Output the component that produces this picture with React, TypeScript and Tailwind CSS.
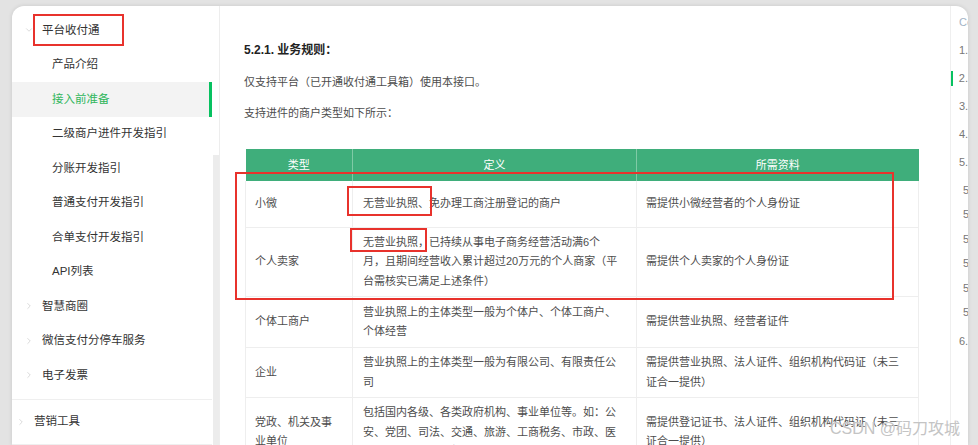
import { ChevronDown, ChevronRight } from 'lucide-react'

const subItems = [
  '产品介绍',
  '接入前准备',
  '二级商户进件开发指引',
  '分账开发指引',
  '普通支付开发指引',
  '合单支付开发指引',
  'API列表',
]

const groupItems = ['智慧商圈', '微信支付分停车服务', '电子发票']

const rows = [
  { type: ['小微'], def: ['无营业执照、免办理工商注册登记的商户'], need: ['需提供小微经营者的个人身份证'], h: 'h-[46px]' },
  {
    type: ['个人卖家'],
    def: ['无营业执照，已持续从事电子商务经营活动满6个', '月，且期间经营收入累计超过20万元的个人商家（平', '台需核实已满足上述条件）'],
    need: ['需提供个人卖家的个人身份证'],
    h: 'h-[69px]',
  },
  {
    type: ['个体工商户'],
    def: ['营业执照上的主体类型一般为个体户、个体工商户、', '个体经营'],
    need: ['需提供营业执照、经营者证件'],
    h: 'h-[51px]',
  },
  {
    type: ['企业'],
    def: ['营业执照上的主体类型一般为有限公司、有限责任公', '司'],
    need: ['需提供营业执照、法人证件、组织机构代码证（未三', '证合一提供）'],
    h: 'h-[50px]',
  },
  {
    type: ['党政、机关及事', '业单位'],
    def: ['包括国内各级、各类政府机构、事业单位等。如：公', '安、党团、司法、交通、旅游、工商税务、市政、医', '疗、教育、学校等机构'],
    need: ['需提供登记证书、法人证件、组织机构代码证（未三', '证合一提供）'],
    h: 'h-[69px]',
  },
]

function Lines({ lines }: { lines: string[] }) {
  return (
    <>
      {lines.map((l) => (
        <div key={l} className="whitespace-nowrap">
          {l}
        </div>
      ))}
    </>
  )
}

function Sidebar() {
  return (
    <div className="relative flex w-[208px] shrink-0 border-r border-[#ededed]">
      <div className="w-[200px] shrink-0 pt-[7px] text-[11.5px] text-[#333]">
        <div className="flex h-[34.5px] items-center pl-[12px]">
          <ChevronDown size={10} strokeWidth={1.5} className="text-[#c4c4c4]" />
          <span className="ml-[8px]">平台收付通</span>
        </div>
        {subItems.map((s) => (
          <div
            key={s}
            className={
              s === '接入前准备'
                ? 'flex h-[34.5px] items-center border-r-[3px] border-[#07c160] bg-[#f3f3f3] pl-[40px] text-[#2fb65c]'
                : 'flex h-[34.5px] items-center pl-[40px]'
            }
          >
            {s}
          </div>
        ))}
        {groupItems.map((g) => (
          <div key={g} className="flex h-[34.5px] items-center pl-[12px]">
            <ChevronRight size={10} strokeWidth={1.5} className="text-[#c4c4c4]" />
            <span className="ml-[8px]">{g}</span>
          </div>
        ))}
        <div className="mt-[6px] flex h-[46px] items-center border-t border-b border-[#efefef] pl-[4px]">
          <ChevronRight size={10} strokeWidth={1.5} className="text-[#c4c4c4]" />
          <span className="ml-[8px]">营销工具</span>
        </div>
      </div>
      <div className="ml-[1px] flex w-[6px] flex-col">
        <div className="h-[149px] shrink-0" />
        <div className="flex-1 bg-[#ececec]" />
      </div>
      <div className="absolute left-[21px] top-[8px] h-[32px] w-[91px] border-2 border-[#e8322c]" />
    </div>
  )
}

function Table() {
  return (
    <div className="relative w-[673px]">
      <table className="w-[673px] table-fixed border-collapse text-[11px] text-[#4d4d4d]">
        <colgroup>
          <col className="w-[107px]" />
          <col className="w-[284px]" />
          <col className="w-[282px]" />
        </colgroup>
        <thead>
          <tr className="h-[32px] bg-[#3fae7b] text-white">
            <th className="border-r border-[#7fcaa6] font-normal">类型</th>
            <th className="border-r border-[#7fcaa6] font-normal">定义</th>
            <th className="font-normal">所需资料</th>
          </tr>
        </thead>
        <tbody>
          {rows.map((r) => (
            <tr key={r.type.join('')} className={`${r.h} border-b border-[#eeeeee]`}>
              <td className="border-l border-r border-[#eeeeee] px-[9px] py-[5px] align-middle leading-[19.5px]">
                <Lines lines={r.type} />
              </td>
              <td className="border-r border-[#eeeeee] px-[10px] py-[5px] align-middle leading-[19.5px]">
                <Lines lines={r.def} />
              </td>
              <td className="border-r border-[#eeeeee] px-[9px] py-[5px] align-middle leading-[19.5px]">
                <Lines lines={r.need} />
              </td>
            </tr>
          ))}
        </tbody>
      </table>
      <div className="absolute left-[-10px] top-[23px] h-[128px] w-[659px] border-2 border-[#e8322c]" />
      <div className="absolute left-[102px] top-[37px] h-[30px] w-[85px] border-2 border-[#e8322c]" />
      <div className="absolute left-[105px] top-[79px] h-[24px] w-[77px] border-2 border-[#e8322c]" />
    </div>
  )
}

function Toc() {
  const top = ['1.', '2.', '3.', '4.', '5.']
  const subs = ['5', '5', '5', '5', '5', '5']
  return (
    <div className="w-[18px] shrink-0 overflow-hidden border-l border-[#efefef] pt-[2px] text-[11px] text-[#777]">
      <div className="h-[28px] pl-[8px] leading-[28px] text-[#a3b3c6]">Co</div>
      {top.map((t) => (
        <div
          key={t}
          className={
            t === '2.'
              ? 'flex h-[28px] items-center'
              : 'flex h-[28px] items-center pl-[8px]'
          }
        >
          {t === '2.' && <div className="mr-[6px] h-[15px] w-[2px] bg-[#07c160]" />}
          {t}
        </div>
      ))}
      <div className="mt-[2px]">
        {subs.map((s, i) => (
          <div key={i} className="h-[24.4px] pl-[12px] leading-[24.4px]">
            {s}
          </div>
        ))}
      </div>
      <div className="mt-[3px] h-[28px] pl-[8px] leading-[28px]">6.</div>
    </div>
  )
}

export default function App() {
  return (
    <div className="relative h-[445px] w-[978px] overflow-hidden bg-[#e3e3e3] pl-[12px] pr-[10px] pt-[6px] font-['Liberation_Sans','Noto_Sans_CJK_SC',sans-serif]">
      <div className="flex h-full overflow-hidden rounded-t-[12px] bg-white shadow-[0_0_4px_rgba(0,0,0,0.12)]">
        <Sidebar />
        <div className="flex-1 overflow-hidden pl-[24px] pt-[34px] text-[11px] text-[#4d4d4d]">
          <div className="text-[12px] font-bold leading-[20px] text-[#222]">5.2.1. 业务规则：</div>
          <p className="mt-[12px] leading-[20px]">仅支持平台（已开通收付通工具箱）使用本接口。</p>
          <p className="mt-[11px] leading-[20px]">支持进件的商户类型如下所示：</p>
          <div className="mt-[26px] pl-[1px]">
            <Table />
          </div>
        </div>
        <Toc />
      </div>
      <div className="absolute left-[830px] top-[417px] whitespace-nowrap text-[16px] text-[#c4c4c4] [text-shadow:0_0_1px_rgba(255,255,255,0.8)]">
        CSDN @码刀攻城
      </div>
    </div>
  )
}
